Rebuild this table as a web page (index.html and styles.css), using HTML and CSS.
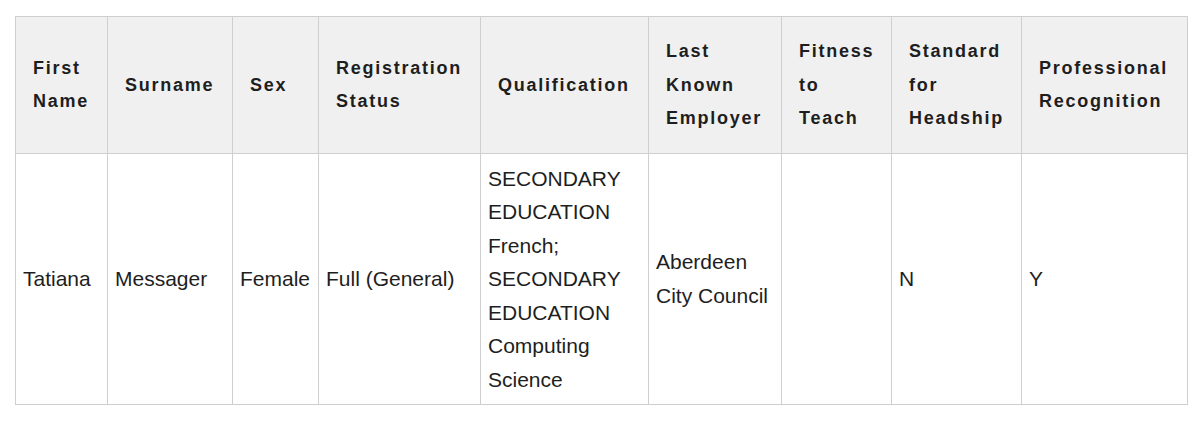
FILE: index.html
```html
<!DOCTYPE html>
<html lang="en">
<head>
<meta charset="utf-8">
<title>Teacher record</title>
<link rel="stylesheet" href="styles.css">
</head>
<body>
<table class="records">
  <colgroup>
    <col class="c-first">
    <col class="c-surname">
    <col class="c-sex">
    <col class="c-status">
    <col class="c-qual">
    <col class="c-employer">
    <col class="c-fitness">
    <col class="c-headship">
    <col class="c-recog">
  </colgroup>
  <thead>
    <tr>
      <th>First Name</th>
      <th>Surname</th>
      <th>Sex</th>
      <th>Registration Status</th>
      <th>Qualification</th>
      <th>Last Known Employer</th>
      <th>Fitness to Teach</th>
      <th>Standard for Headship</th>
      <th>Professional Recognition</th>
    </tr>
  </thead>
  <tbody>
    <tr>
      <td>Tatiana</td>
      <td>Messager</td>
      <td>Female</td>
      <td>Full (General)</td>
      <td>SECONDARY EDUCATION French; SECONDARY EDUCATION Computing Science</td>
      <td>Aberdeen City Council</td>
      <td></td>
      <td>N</td>
      <td>Y</td>
    </tr>
  </tbody>
</table>
</body>
</html>
```
FILE: styles.css
```css
html, body {
  margin: 0;
  padding: 0;
  background: #ffffff;
}
body {
  padding: 16px 13px 0 15px;
  font-family: "Liberation Sans", Arial, Helvetica, sans-serif;
  color: #1e1e1e;
}
.records {
  border-collapse: collapse;
  table-layout: fixed;
  width: 1172px;
}
.c-first { width: 92px; }
.c-surname { width: 125px; }
.c-sex { width: 86px; }
.c-status { width: 162px; }
.c-qual { width: 168px; }
.c-employer { width: 133px; }
.c-fitness { width: 110px; }
.c-headship { width: 130px; }
.c-recog { width: 166px; }

.records th,
.records td {
  border: 1px solid #cfcfcf;
  vertical-align: middle;
  text-align: left;
}
.records th {
  background: #f0f0f0;
  font-size: 18px;
  font-weight: bold;
  letter-spacing: 1.75px;
  line-height: 33.5px;
  padding: 18px 10px 17px 17px;
  height: 100px;
}
.records td {
  font-size: 21px;
  line-height: 33.5px;
  padding: 8px 6px 8px 7px;
}
```
